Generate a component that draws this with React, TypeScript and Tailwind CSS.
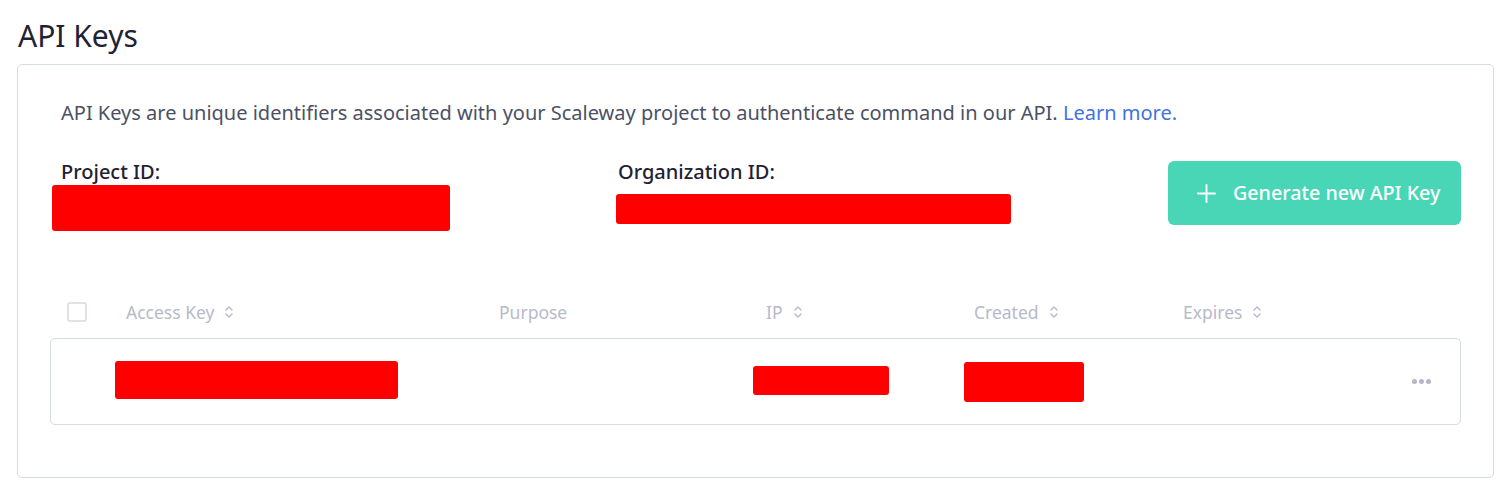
import React from "react";

const SortIcon = () => (
  <svg width="10" height="16" viewBox="0 0 10 16" fill="none" className="ml-[10px] inline-block">
    <path d="M2 6l3-3 3 3M2 10l3 3 3-3" stroke="#b4b8c8" strokeWidth="1.4" strokeLinecap="round" strokeLinejoin="round" />
  </svg>
);

const Redacted = ({ className }: { className: string }) => (
  <div className={`bg-[#ff0000] rounded-[3px] ${className}`} />
);

const columns = [
  { label: "Access Key", sort: true },
  { label: "Purpose", sort: false },
  { label: "IP", sort: true },
  { label: "Created", sort: true },
  { label: "Expires", sort: true },
];

export default function App() {
  return (
    <div className="min-h-[492px] bg-white px-[17px] font-['Noto_Sans',sans-serif]">
      <h1 className="pt-[14px] pb-[6px] text-[30px] leading-[44px] text-[#1f2234] pl-px">API Keys</h1>

      <div className="border border-[#d7dbe5] rounded-[5px] w-[1477px] h-[414px] px-8 pt-[34px]">
        <p className="pl-[11px] text-[20px] leading-[28px] text-[#4b5065]">
          API Keys are unique identifiers associated with your Scaleway project to authenticate command in our API.{" "}
          <a className="text-[#3f74dc]">Learn more.</a>
        </p>

        <div className="mt-[32px] flex">
          <div className="w-[566px]">
            <div className="pl-[11px] text-[20px] leading-[26px] font-medium text-[#1f2234]">Project ID:</div>
            <Redacted className="ml-[2px] w-[398px] h-[46px]" />
          </div>
          <div className="flex-1">
            <div className="pl-[2px] text-[20px] leading-[26px] font-medium text-[#1f2234]">Organization ID:</div>
            <Redacted className="mt-[9px] w-[395px] h-[30px]" />
          </div>
          <button className="mt-[2px] h-16 w-[293px] rounded-[6px] bg-[#48d6b7] flex items-center pl-[29px] text-white text-[19.7px] font-medium">
            <svg width="19" height="19" viewBox="0 0 20 20" className="mr-[17px]">
              <path d="M10 1v18M1 10h18" stroke="white" strokeWidth="2" strokeLinecap="round" />
            </svg>
            Generate new API Key
          </button>
        </div>

        <div className="mt-[68px] grid grid-cols-[76px_373px_267px_208px_209px_1fr] items-center h-[24px] text-[17.5px] text-[#b6bac9]">
          <div className="pl-[17px]">
            <div className="w-5 h-5 rounded-[3px] border-2 border-[#dfe2ea]" />
          </div>
          {columns.map((c) => (
            <div key={c.label} className="flex items-center">
              {c.label}
              {c.sort && <SortIcon />}
            </div>
          ))}
          <div />
        </div>

        <div className="mt-[15px] border border-[#d7dbe5] rounded-[5px] h-[87px] grid grid-cols-[76px_373px_267px_208px_209px_1fr] items-center">
          <div />
          <div>
            <Redacted className="ml-[-12px] mt-[-3px] w-[283px] h-[38px]" />
          </div>
          <div />
          <div>
            <Redacted className="ml-[-14px] mt-[-3px] w-[136px] h-[29px]" />
          </div>
          <div>
            <Redacted className="ml-[-11px] w-[120px] h-[40px]" />
          </div>
          <div className="flex justify-end pr-[29px] gap-[2px]">
            <span className="w-[5px] h-[5px] rounded-full bg-[#b4b8c8]" />
            <span className="w-[5px] h-[5px] rounded-full bg-[#b4b8c8]" />
            <span className="w-[5px] h-[5px] rounded-full bg-[#b4b8c8]" />
          </div>
        </div>
      </div>
    </div>
  );
}
